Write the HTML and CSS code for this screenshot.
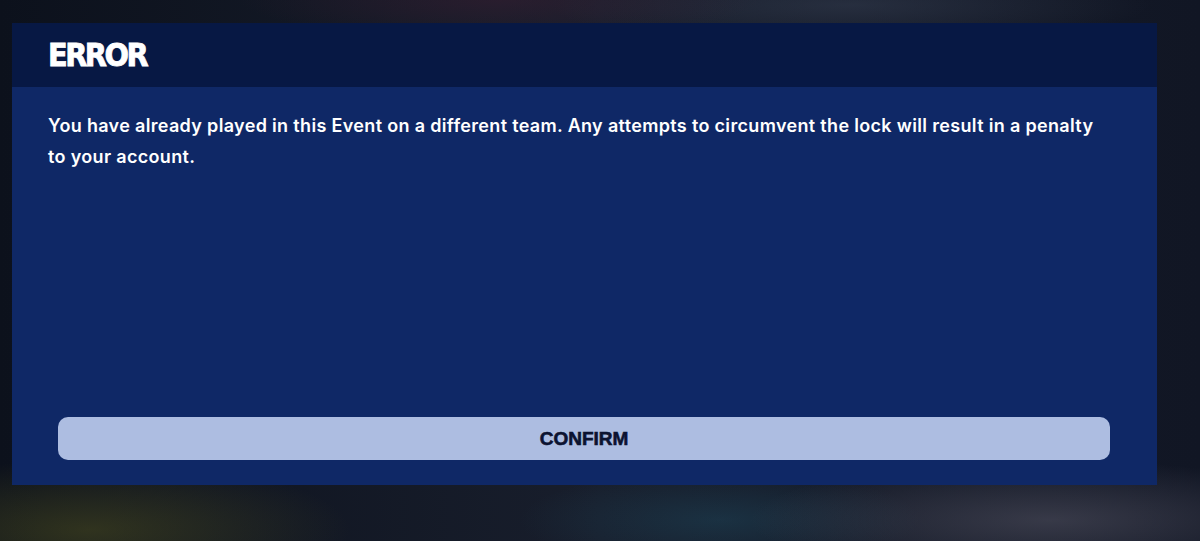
FILE: index.html
```html
<!DOCTYPE html>
<html lang="en">
<head>
    <meta charset="UTF-8">
    <title>Error</title>
    <link rel="stylesheet" href="styles.css">
</head>
<body>
    <div class="backdrop">
        <div class="dialog">
            <div class="dialog-header">
                <h1>ERROR</h1>
            </div>
            <div class="dialog-body">
                <p class="message">You have already played in this Event on a different team. Any attempts to circumvent the lock will result in a penalty to your account.</p>
                <button class="confirm" type="button">CONFIRM</button>
            </div>
        </div>
    </div>
</body>
</html>
```

FILE: styles.css
```css
body {
    margin: 0;
    font-family: 'Inter', 'Noto Sans', sans-serif;
    background-color: #121827;
}

/* blurred game scene behind the modal */
.backdrop {
    width: 1200px;
    height: 541px;
    padding: 23px 43px 56px 12px;
    box-sizing: border-box;
    background:
        radial-gradient(ellipse 260px 70px at 90px 530px, rgba(90, 90, 30, 0.45), transparent),
        radial-gradient(ellipse 300px 60px at 1050px 520px, rgba(80, 80, 95, 0.6), transparent),
        radial-gradient(ellipse 200px 50px at 720px 520px, rgba(30, 70, 90, 0.5), transparent),
        radial-gradient(ellipse 260px 40px at 500px 0px, rgba(60, 30, 50, 0.5), transparent),
        radial-gradient(ellipse 300px 40px at 850px 5px, rgba(60, 70, 90, 0.45), transparent),
        linear-gradient(90deg, #0c111c 0%, #181e2c 50%, #111624 100%);
}

.dialog {
    display: flex;
    flex-direction: column;
    height: 462px;
    background-color: #0f2866;
}

.dialog-header {
    height: 64px;
    padding: 0 36px;
    display: flex;
    align-items: center;
    background-color: #071844;
}

h1 {
    margin: 0;
    font-family: 'DejaVu Sans Condensed', 'DejaVu Sans', sans-serif;
    font-weight: bold;
    font-size: 32px;
    color: #fff;
    letter-spacing: -2.5px;
    -webkit-text-stroke: 0.8px #fff;
}

.dialog-body {
    flex: 1;
    display: flex;
    flex-direction: column;
    padding: 23px 47px 25px 36px;
}

.message {
    margin: 0;
    font-size: 18px;
    font-weight: 600;
    letter-spacing: 0.33px;
    line-height: 31px;
    color: #fff;
}

.confirm {
    margin-top: auto;
    margin-left: 10px;
    height: 43px;
    border: none;
    border-radius: 10px;
    background-color: #adbde1;
    color: #0c1330;
    font-family: 'Liberation Sans', Arial, sans-serif;
    font-weight: bold;
    font-size: 19px;
    -webkit-text-stroke: 0.6px #0c1330;
    cursor: pointer;
}
```
